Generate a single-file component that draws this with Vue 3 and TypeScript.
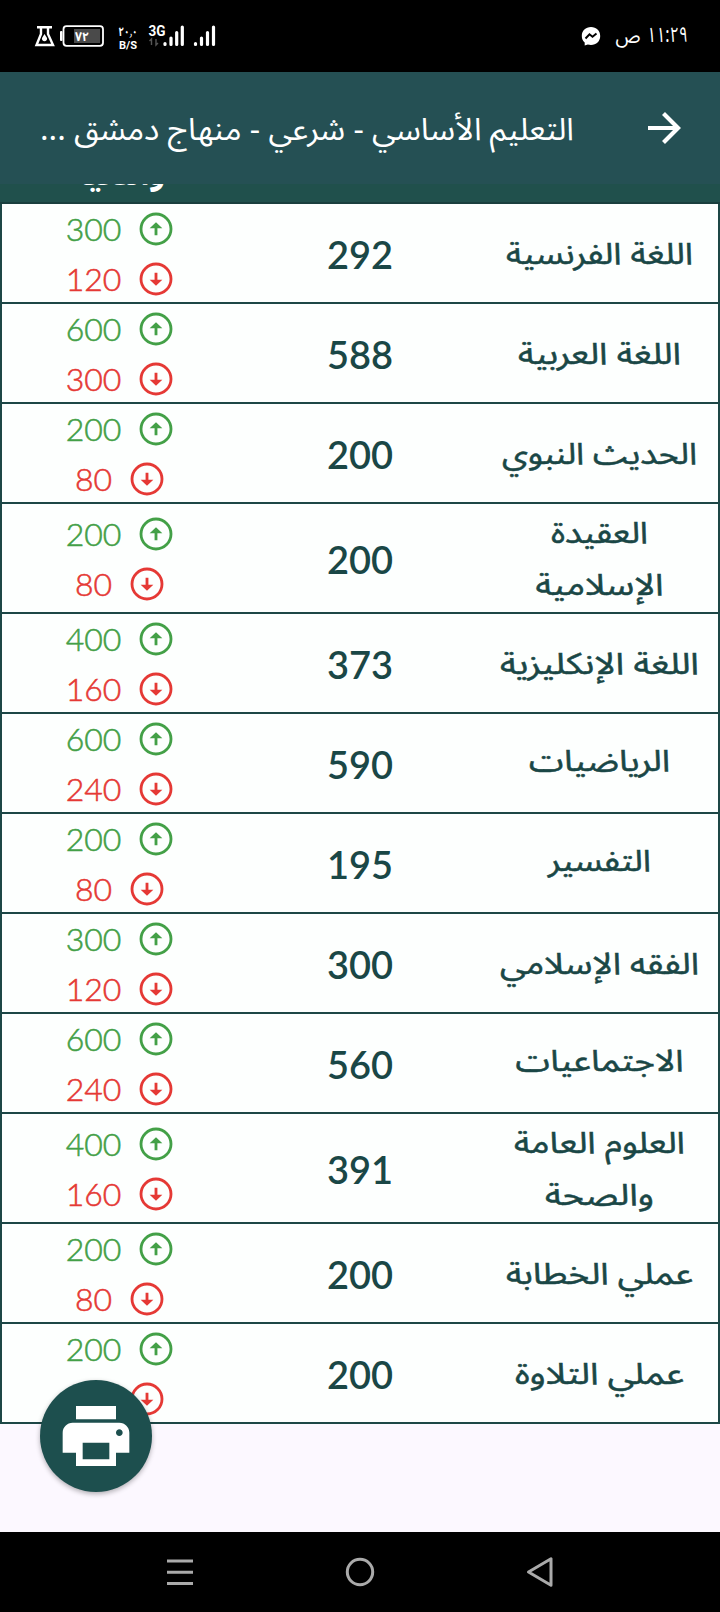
<script setup lang="ts">
interface NameLine {
  text: string
  width: number
  baseline: number
}

interface Subject {
  lines: NameLine[]
  score: number
  max: number
  min: number
}

const line = (text: string, width: number, baseline = 37): NameLine => ({ text, width, baseline })

const subjects: Subject[] = [
  { lines: [line('اللغة الفرنسية', 187)], score: 292, max: 300, min: 120 },
  { lines: [line('اللغة العربية', 163)], score: 588, max: 600, min: 300 },
  { lines: [line('الحديث النبوي', 195)], score: 200, max: 200, min: 80 },
  { lines: [line('العقيدة', 97), line('الإسلامية', 128)], score: 200, max: 200, min: 80 },
  { lines: [line('اللغة الإنكليزية', 199)], score: 373, max: 400, min: 160 },
  { lines: [line('الرياضيات', 141, 34)], score: 590, max: 600, min: 240 },
  { lines: [line('التفسير', 103, 34)], score: 195, max: 200, min: 80 },
  { lines: [line('الفقه الإسلامي', 199)], score: 300, max: 300, min: 120 },
  { lines: [line('الاجتماعيات', 168, 34)], score: 560, max: 600, min: 240 },
  { lines: [line('العلوم العامة', 171), line('والصحة', 109)], score: 391, max: 400, min: 160 },
  { lines: [line('عملي الخطابة', 187)], score: 200, max: 200, min: 80 },
  { lines: [line('عملي التلاوة', 169)], score: 200, max: 200, min: 80 },
]
</script>

<template>
  <div class="screen">
    <header class="status">
      <svg class="status-left" width="200" height="40" viewBox="30 16 200 40">
        <g fill="none" stroke="#fff" stroke-width="2.4">
          <path d="M37 27.2H52M41 28v6L36.5 45H53L48 34v-6" />
          <rect x="63.5" y="26.2" width="39.5" height="19.6" rx="3" stroke-width="1.8" />
        </g>
        <path d="M44.5 34l2.5 4a2.6 2.6 0 1 1-5 0z" fill="#fff" />
        <rect x="60" y="31" width="2.5" height="10" rx="1" fill="#fff" />
        <rect x="74" y="29" width="26" height="14" fill="#4a4a4a" />
        <text x="82" y="40.5" class="ar b" text-anchor="middle" font-size="13" textLength="14" lengthAdjust="spacingAndGlyphs">٧٢</text>
        <text x="128" y="36" class="ar b" text-anchor="middle" font-size="12.5" textLength="19" lengthAdjust="spacingAndGlyphs">٢٠٫٠</text>
        <text x="128" y="49" class="lat b" text-anchor="middle" font-size="10.5" textLength="18" lengthAdjust="spacingAndGlyphs">B/S</text>
        <text x="148.5" y="36" class="lat b" font-size="14" textLength="17" lengthAdjust="spacingAndGlyphs">3G</text>
        <path d="M151.5 45v-6l-2 2M156 39v6l2-2" fill="none" stroke="#555" stroke-width="1.4" />
        <g stroke="#fff" stroke-width="3.2" stroke-linecap="round">
          <path d="M165 43.5v1M171 38v6.5M176.700 32.500v12M182.300 27v17.500" />
          <path d="M195.500 43.500v1M201.500 38v6.500M207.500 32.500v12M213.500 27v17.500" />
        </g>
      </svg>
      <svg class="status-right" width="120" height="40" viewBox="575 16 120 40">
        <path d="M591 27c-5.300 0-9.200 3.800-9.200 8.900 0 2.700 1.100 5 2.900 6.600v3l3.100-1.100c1 .3 2.100.5 3.200.5 5.300 0 9.200-3.800 9.200-9S596.300 27 591 27z" fill="#fff" />
        <path d="M585.500 38.500l4-4.200 3 2.400 4-3.200" fill="none" stroke="#000" stroke-width="2" />
        <text x="628" y="43" class="ar" text-anchor="middle" font-size="20" textLength="25" lengthAdjust="spacingAndGlyphs">ص</text>
        <text x="667.500" y="42" class="ar" text-anchor="middle" font-size="21" textLength="41" lengthAdjust="spacingAndGlyphs">١١:٢٩</text>
      </svg>
    </header>

    <div class="appbar">
      <svg width="532" height="60" class="title">
        <text x="266" y="41.500" class="ar" text-anchor="middle" font-size="31" textLength="534" lengthAdjust="spacingAndGlyphs">التعليم الأساسي - شرعي - منهاج دمشق ...</text>
      </svg>
      <svg width="48" height="48" viewBox="0 0 48 48" class="back">
        <path d="M8 24H38M23.500 9.500L38 24L23.500 38.500" fill="none" stroke="#fff" stroke-width="4.200" />
      </svg>
    </div>

    <main class="table">
      <div class="thead">
        <svg width="240" height="20">
          <text x="122" y="1" class="ar b" text-anchor="middle" font-size="31" textLength="86" lengthAdjust="spacingAndGlyphs">والدنيا</text>
        </svg>
      </div>
      <div v-for="(s, i) in subjects" :key="i" class="row" :class="{ tall: s.lines.length > 1 }">
        <div class="name">
          <svg v-for="l in s.lines" :key="l.text" width="236" height="52">
            <text x="118.500" :y="l.baseline" class="ar label" text-anchor="middle" font-size="30" :textLength="l.width" lengthAdjust="spacingAndGlyphs">{{ l.text }}</text>
          </svg>
        </div>
        <div class="score">{{ s.score }}</div>
        <div class="range">
          <div class="limit up">
            <svg class="arrow" viewBox="0 0 24 24">
              <circle cx="12" cy="12" r="9" />
              <path d="M11.150 15.800v-4.200H8.200L12 8l3.800 3.600h-2.950v4.200z" />
            </svg>
            <span>{{ s.max }}</span>
          </div>
          <div class="limit down">
            <svg class="arrow" viewBox="0 0 24 24">
              <circle cx="12" cy="12" r="9" />
              <path d="M11.150 8.200v4.200H8.200L12 16l3.800-3.600h-2.950V8.200z" />
            </svg>
            <span>{{ s.min }}</span>
          </div>
        </div>
      </div>
    </main>

    <button class="fab">
      <svg width="80" height="80" viewBox="0 0 24 24" fill="#fff">
        <path d="M19 8H5c-1.660 0-3 1.340-3 3v6h4v4h12v-4h4v-6c0-1.660-1.340-3-3-3zm-3 11H8v-5h8v5zm3-7c-.55 0-1-.45-1-1s.45-1 1-1 1 .45 1 1-.45 1-1 1zm-1-9H6v4h12V3z" />
      </svg>
    </button>

    <nav class="navbar">
      <svg width="30" height="32" viewBox="0 0 30 32"><path d="M2 5H28M2 16.300H28M2 27.600H28" /></svg>
      <svg width="30" height="32" viewBox="0 0 30 32"><circle cx="15" cy="16" r="12.700" /></svg>
      <svg width="30" height="32" viewBox="0 0 30 32"><path d="M3.500 16L26 2.800V29.200Z" stroke-linejoin="round" /></svg>
    </nav>
  </div>
</template>

<style>
html,
body {
  margin: 0;
}
</style>

<style scoped>
.screen {
  position: relative;
  display: flex;
  flex-direction: column;
  width: 720px;
  height: 1612px;
  overflow: hidden;
  background: #fcf8ff;
}
svg {
  display: block;
  flex: none;
}
.ar {
  font-family: 'Noto Sans Arabic', 'DejaVu Sans', sans-serif;
  fill: #fff;
  direction: rtl;
}
.lat {
  font-family: Roboto, sans-serif;
  fill: #fff;
}
.b {
  font-weight: 700;
}
.status {
  display: flex;
  justify-content: space-between;
  align-items: center;
  height: 72px;
  padding: 0 25px 0 30px;
  box-sizing: border-box;
  background: #000;
}
.status-right {
  overflow: visible;
}
.appbar {
  display: flex;
  justify-content: space-between;
  align-items: center;
  height: 112px;
  padding: 0 32px 0 41px;
  box-sizing: border-box;
  background: #255054;
}
.title {
  overflow: visible;
}
.table {
  direction: rtl;
}
.thead {
  display: flex;
  justify-content: flex-end;
  height: 20px;
  box-sizing: border-box;
  border-bottom: 2px solid #1a3f3e;
  background: #20504c;
  overflow: hidden;
}
.row {
  display: grid;
  grid-template-columns: 238px 240px 238px;
  grid-template-rows: 98px;
  height: 100px;
  box-sizing: border-box;
  border: 2px solid #1d4746;
  border-top: 0;
  background: #fdfffe;
}
.row.tall {
  grid-template-rows: 108px;
  height: 110px;
}
.name {
  display: flex;
  flex-direction: column;
  align-items: center;
  justify-content: center;
}
.name svg {
  overflow: visible;
}
.label {
  fill: #1a4746;
  stroke: #1a4746;
  stroke-width: 0.5px;
}
.score {
  display: flex;
  align-items: center;
  justify-content: center;
  padding-top: 2px;
  font: 600 38px Lato, sans-serif;
  color: #1a4746;
}
.range {
  display: flex;
  flex-direction: column;
  justify-content: center;
  padding-top: 2px;
}
.limit {
  display: flex;
  align-items: center;
  justify-content: center;
  gap: 15px;
  flex: none;
  height: 50px;
  font: 300 32px Lato, sans-serif;
}
.limit span {
  padding-bottom: 2px;
  -webkit-text-stroke: 0.55px currentColor;
}
.arrow {
  width: 40px;
  height: 40px;
  fill: currentColor;
}
.arrow circle {
  fill: none;
  stroke: currentColor;
  stroke-width: 1.7px;
}
.up {
  color: #43a047;
}
.down {
  color: #e53935;
}
.fab {
  position: absolute;
  left: 40px;
  top: 1380px;
  display: flex;
  align-items: center;
  justify-content: center;
  width: 112px;
  height: 112px;
  padding: 0;
  border: 0;
  border-radius: 50%;
  background: #1d4f4e;
  box-shadow: 0 2px 5px rgba(0, 0, 0, 0.3);
}
.navbar {
  display: flex;
  justify-content: space-around;
  align-items: center;
  height: 80px;
  margin-top: auto;
  padding: 0 90px;
  background: #000;
}
.navbar svg {
  fill: none;
  stroke: #aaa;
  stroke-width: 3px;
}
</style>
